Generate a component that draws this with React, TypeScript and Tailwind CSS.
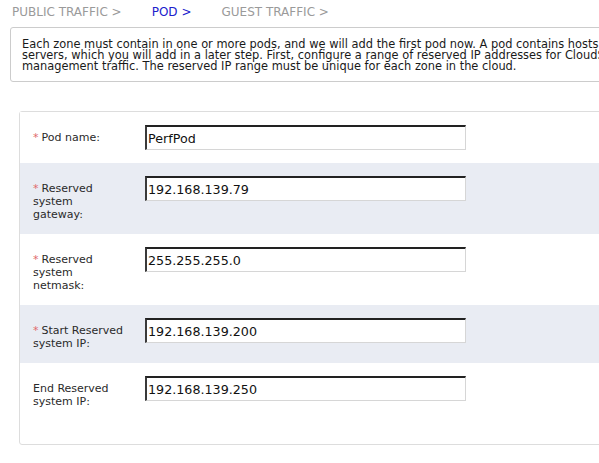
import React from 'react';

type Field = {
  label: string[];
  value: string;
  required?: boolean;
};

// label lines are broken as the original form wraps them
const FIELDS: Field[] = [
  { label: ['Pod name:'], value: 'PerfPod', required: true },
  { label: ['Reserved', 'system', 'gateway:'], value: '192.168.139.79', required: true },
  { label: ['Reserved', 'system', 'netmask:'], value: '255.255.255.0', required: true },
  { label: ['Start Reserved', 'system IP:'], value: '192.168.139.200', required: true },
  { label: ['End Reserved', 'system IP:'], value: '192.168.139.250' },
];

const STEPS = [
  { name: 'PUBLIC TRAFFIC', active: false },
  { name: 'POD', active: true },
  { name: 'GUEST TRAFFIC', active: false },
];

const DESCRIPTION = [
  'Each zone must contain in one or more pods, and we will add the first pod now. A pod contains hosts and primary storage',
  "servers, which you will add in a later step. First, configure a range of reserved IP addresses for CloudStack's internal",
  'management traffic. The reserved IP range must be unique for each zone in the cloud.',
];

export default function App() {
  return (
    <div className="h-screen w-screen overflow-hidden bg-white font-['DejaVu_Sans',sans-serif]">
      <div className="w-[820px]">
        {/* --- step trail --- */}
        <div className="flex gap-[30px] pl-[12px] pt-[5px] text-[12px] leading-[14px]">
          {STEPS.map(step => (
            <span key={step.name} className={step.active ? 'text-[#2020cc]' : 'text-[#9a9a9a]'}>
              {step.name} &gt;
            </span>
          ))}
        </div>

        {/* --- description --- */}
        <div className="ml-[10px] mt-[8px] rounded-[3px] border border-[#cccccc] pl-[11px] pr-[10px] pt-[11px] pb-[9px] text-[11.4px] leading-[11px] text-[#1a1a1a]">
          {DESCRIPTION.map(line => (
            <div key={line} className="whitespace-nowrap">
              {line}
            </div>
          ))}
        </div>

        {/* --- pod form --- */}
        <div className="ml-[19px] mt-[29px] rounded-[3px] border border-[#dddddd] pb-[23px]">
          {FIELDS.map((field, i) => (
            <div
              key={field.value}
              className={`flex items-start py-[13px] pl-[13px] ${i % 2 === 1 ? 'bg-[#e9ecf3]' : 'bg-white'}`}
            >
              <div className="w-[112px] shrink-0 pt-[6px] text-[11px] leading-[13px] text-[#2a2a2a]">
                {field.label.map((line, j) => (
                  <div key={line} className="whitespace-nowrap">
                    {j === 0 && field.required && <span className="mr-[3px] text-[#e06a6a]">*</span>}
                    {line}
                  </div>
                ))}
              </div>
              <input
                readOnly
                value={field.value}
                className="h-[25px] w-[321px] border-b border-l-2 border-r border-t-2 border-b-[#d6d6d6] border-l-[#3a3a3a] border-r-[#d6d6d6] border-t-[#222222] bg-white pl-[1px] font-['DejaVu_Sans',sans-serif] text-[12.7px] text-[#111111] outline-none"
              />
            </div>
          ))}
        </div>
      </div>
    </div>
  );
}
